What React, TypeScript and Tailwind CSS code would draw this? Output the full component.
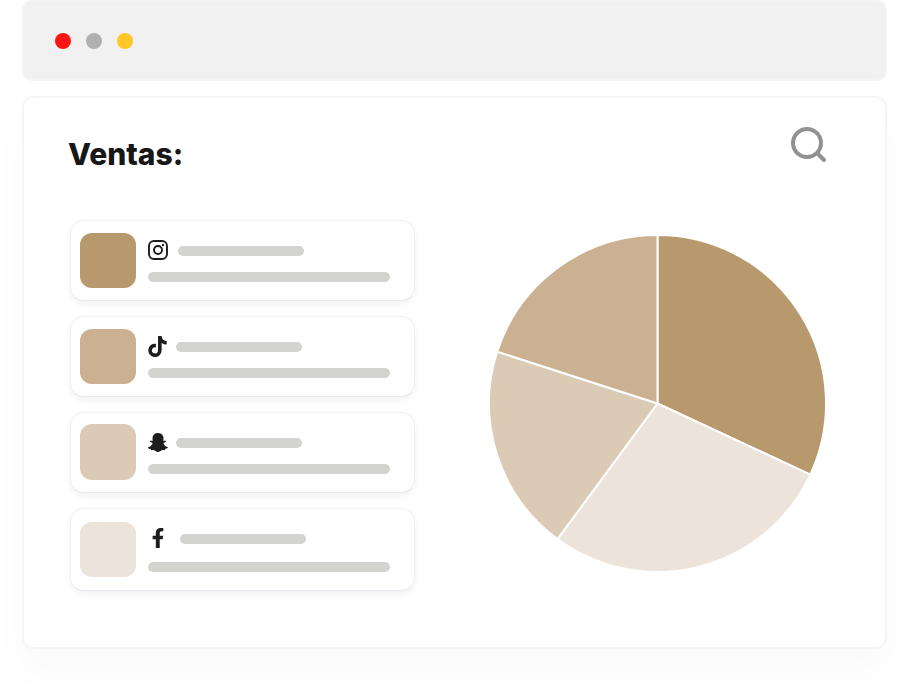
import React from "react";
import { FaTiktok, FaSnapchatGhost, FaFacebookF } from "react-icons/fa";

const ink = "#1d1d1d";

function InstagramIcon() {
  return (
    <svg width="20" height="20" viewBox="0 0 20 20" fill="none" stroke={ink}>
      <rect x="1" y="1" width="18" height="18" rx="5" strokeWidth="1.9" />
      <circle cx="10" cy="10" r="4" strokeWidth="1.9" />
      <circle cx="15" cy="5" r="1.2" fill={ink} stroke="none" />
    </svg>
  );
}

function Row({
  cardClass,
  swatchClass,
  columnClass,
  icon,
  iconBoxClass,
  barClass,
  longClass,
}: {
  cardClass: string;
  swatchClass: string;
  columnClass: string;
  icon: React.ReactNode;
  iconBoxClass: string;
  barClass: string;
  longClass: string;
}) {
  return (
    <div
      className={`flex w-[345px] items-start rounded-[14px] border border-[#f0f0f3] border-b-[#e8e8f0] bg-white pl-[9px] shadow-[0_3px_7px_rgba(60,60,90,0.07)] ${cardClass}`}
    >
      <div className={`w-[56px] shrink-0 rounded-[12px] ${swatchClass}`} />
      <div className={`ml-[12px] w-[242px] ${columnClass}`}>
        <div className="flex h-[20px] items-center">
          <div className={`flex h-[20px] shrink-0 items-center justify-center ${iconBoxClass}`}>{icon}</div>
          <div className={`h-[10px] w-[126px] rounded-full bg-[#d3d3cf] ${barClass}`} />
        </div>
        <div className={`h-[10px] w-[242px] rounded-full bg-[#d3d3cf] ${longClass}`} />
      </div>
    </div>
  );
}

export default function App() {
  return (
    <div className="flex h-[688px] w-[910px] flex-col overflow-hidden bg-white pl-[22px] font-['Inter',sans-serif]">
      <div className="flex h-[81px] w-[865px] shrink-0 items-center gap-[15px] rounded-[10px] border-2 border-[#f4f4f4] bg-[#f1f1f1] pl-[31px]">
        <span className="h-[16px] w-[16px] rounded-full bg-[#ff1414]" />
        <span className="h-[16px] w-[16px] rounded-full bg-[#b0b0b0]" />
        <span className="h-[16px] w-[16px] rounded-full bg-[#ffc727]" />
      </div>

      <div className="mt-[15px] h-[553px] w-[865px] shrink-0 rounded-[11px] border-2 border-[#f5f5f5] bg-white pl-[46px] pr-[57px] pt-[29px] shadow-[0_24px_40px_rgba(0,0,0,0.025)]">
        <div className="flex h-[93px] items-start justify-between">
          <h1 className="ml-[-2px] mt-[7px] text-[30px] font-extrabold leading-[40px] tracking-normal text-[#171717]">Ventas:</h1>
          <svg width="38" height="36" viewBox="0 0 38 36" fill="none" stroke="#919191" strokeWidth="4" strokeLinecap="round">
            <circle cx="17" cy="16" r="14" />
            <line x1="27.5" y1="26.5" x2="34" y2="33" />
          </svg>
        </div>

        <div className="flex items-start">
          <div className="flex w-[345px] shrink-0 flex-col gap-[15px]">
            <Row
              cardClass="h-[81px] pt-[12px]"
              swatchClass="h-[55px] bg-[#b8996d]"
              columnClass="pt-[7px]"
              icon={<InstagramIcon />}
              iconBoxClass="w-[20px]"
              barClass="ml-[10px] mt-[2px]"
              longClass="mt-[12px]"
            />
            <Row
              cardClass="h-[81px] pt-[12px]"
              swatchClass="h-[55px] bg-[#cbb191]"
              columnClass="pt-[7px]"
              icon={<FaTiktok size={21} color={ink} />}
              iconBoxClass="w-[19px]"
              barClass="ml-[9px] mt-[2px]"
              longClass="mt-[12px]"
            />
            <Row
              cardClass="h-[81px] pt-[11px]"
              swatchClass="h-[56px] bg-[#dbcbb5]"
              columnClass="pt-[8px]"
              icon={<FaSnapchatGhost size={21} color={ink} />}
              iconBoxClass="w-[20px]"
              barClass="ml-[8px] mt-[2px]"
              longClass="mt-[12px]"
            />
            <Row
              cardClass="h-[83px] pt-[13px]"
              swatchClass="h-[55px] bg-[#ece4db]"
              columnClass="pt-[6px]"
              icon={<FaFacebookF size={20} color={ink} />}
              iconBoxClass="w-[20px]"
              barClass="ml-[12px] mt-[2px]"
              longClass="mt-[14px]"
            />
          </div>

          <svg width="340" height="340" viewBox="0 0 340 340" className="ml-[73px] mt-[13px] shrink-0">
            <g stroke="#ffffff" strokeWidth="2" strokeLinejoin="round">
              <path d="M169.5 170.5 L169.5 2 A168.5 168.5 0 0 1 322.3 241.6 Z" fill="#b8996d" />
              <path d="M169.5 170.5 L322.3 241.6 A168.5 168.5 0 0 1 69.5 306.1 Z" fill="#ece4db" />
              <path d="M169.5 170.5 L69.5 306.1 A168.5 168.5 0 0 1 9.2 118.6 Z" fill="#dbcbb5" />
              <path d="M169.5 170.5 L9.2 118.6 A168.5 168.5 0 0 1 169.5 2 Z" fill="#cbb191" />
            </g>
          </svg>
        </div>
      </div>
    </div>
  );
}
